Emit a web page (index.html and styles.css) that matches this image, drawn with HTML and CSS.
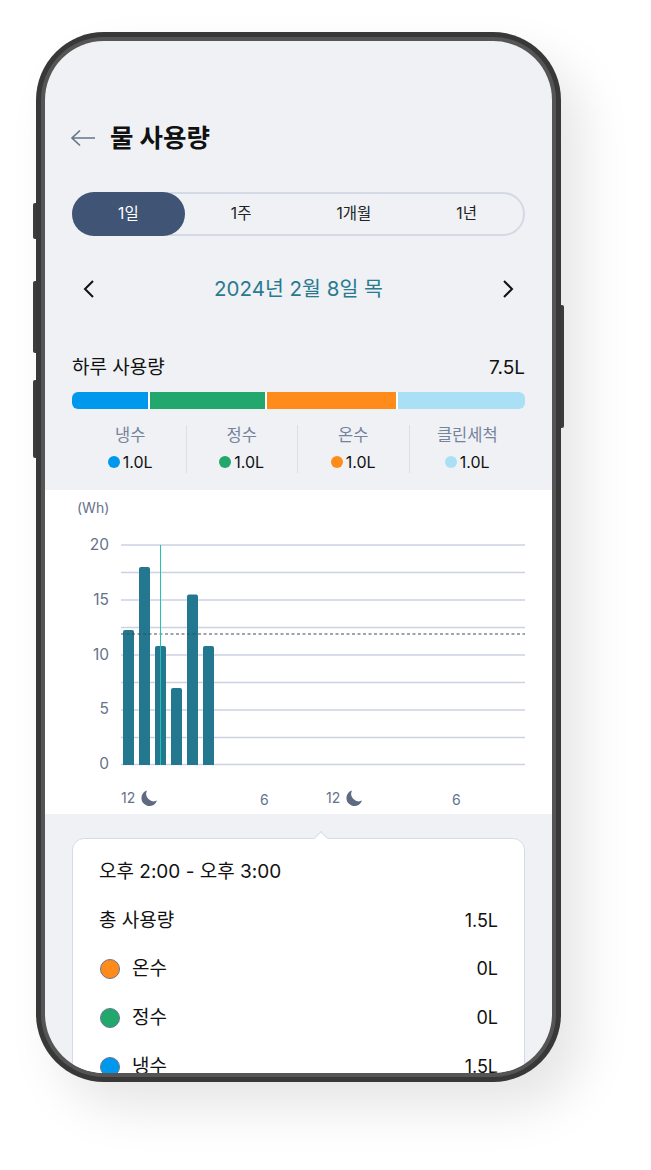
FILE: index.html
```html
<!DOCTYPE html>
<html lang="ko">
<head>
    <meta charset="UTF-8">
    <meta name="viewport" content="width=device-width, initial-scale=1.0">
    <title>물 사용량</title>
    <link rel="stylesheet" href="styles.css">
</head>
<body>
    <div class="phone">
        <span class="side_btn btn_a"></span>
        <span class="side_btn btn_b"></span>
        <span class="side_btn btn_c"></span>
        <span class="side_btn btn_d"></span>

        <div class="bezel">
            <main class="screen">
                <header class="top_bar">
                    <svg class="back" width="26" height="18" viewBox="0 0 26 18" fill="none" stroke="#66768f" stroke-width="1.7">
                        <path d="M25 9H2M10 1.5 2 9l8 7.5"/>
                    </svg>
                    <h1 class="page_title">물 사용량</h1>
                </header>

                <ul class="tabs">
                    <li class="tab on">1일</li>
                    <li class="tab">1주</li>
                    <li class="tab">1개월</li>
                    <li class="tab">1년</li>
                </ul>

                <div class="date_row">
                    <svg width="12" height="20" viewBox="0 0 12 20" fill="none" stroke="#111" stroke-width="2">
                        <path d="M10 2 2 10l8 8"/>
                    </svg>
                    <p class="date">2024년 2월 8일 목</p>
                    <svg width="12" height="20" viewBox="0 0 12 20" fill="none" stroke="#111" stroke-width="2">
                        <path d="m2 2 8 8-8 8"/>
                    </svg>
                </div>

                <section class="summary">
                    <div class="summary_head">
                        <span>하루 사용량</span>
                        <span>7.5L</span>
                    </div>
                    <div class="usage_bar">
                        <span class="seg seg_cold"></span>
                        <span class="seg seg_pure"></span>
                        <span class="seg seg_hot"></span>
                        <span class="seg seg_clean"></span>
                    </div>
                    <ul class="legend">
                        <li class="legend_item">
                            <span class="legend_name">냉수</span>
                            <span class="legend_val"><i class="dot cold"></i>1.0L</span>
                        </li>
                        <li class="legend_item">
                            <span class="legend_name">정수</span>
                            <span class="legend_val"><i class="dot pure"></i>1.0L</span>
                        </li>
                        <li class="legend_item">
                            <span class="legend_name">온수</span>
                            <span class="legend_val"><i class="dot hot"></i>1.0L</span>
                        </li>
                        <li class="legend_item">
                            <span class="legend_name">클린세척</span>
                            <span class="legend_val"><i class="dot clean"></i>1.0L</span>
                        </li>
                    </ul>
                </section>

                <section class="chart">
                    <svg class="chart_svg" width="507" height="324" viewBox="0 0 507 324">
                        <defs>
                            <path id="moon" d="M6 0.4A8 8 0 1 0 16 10.6 7.6 7.6 0 0 1 6 0.4Z" fill="#5d6a82"/>
                        </defs>
                        <g stroke="#ccd2e2" stroke-width="1.3">
                            <path d="M76 55H480M76 82.5H480M76 110H480M76 137.5H480M76 165H480M76 192.5H480M76 220H480M76 247.500H480M76 274.500H480"/>
                        </g>
                        <g fill="#23778f">
                            <path d="M78 275V142a2 2 0 0 1 2-2h7a2 2 0 0 1 2 2V275Z"/>
                            <path d="M94 275V79a2 2 0 0 1 2-2h7a2 2 0 0 1 2 2V275Z"/>
                            <path d="M110 275V158a2 2 0 0 1 2-2h7a2 2 0 0 1 2 2V275Z"/>
                            <path d="M126 275V200a2 2 0 0 1 2-2h7a2 2 0 0 1 2 2V275Z"/>
                            <path d="M142 275V106.500a2 2 0 0 1 2-2h7a2 2 0 0 1 2 2V275Z"/>
                            <path d="M158 275V158a2 2 0 0 1 2-2h7a2 2 0 0 1 2 2V275Z"/>
                        </g>
                        <path d="M76 144H480" stroke="#3f4a5c" stroke-width="1" stroke-dasharray="3 2.500"/>
                        <path d="M115.500 55V275" stroke="#1fc4b4" stroke-width="1"/>
                        <g class="axis_y" text-anchor="end">
                            <text x="64" y="60">20</text>
                            <text x="64" y="115">15</text>
                            <text x="64" y="170">10</text>
                            <text x="64" y="224">5</text>
                            <text x="64" y="279">0</text>
                        </g>
                        <text class="axis_unit" x="32" y="23">(Wh)</text>
                        <g class="axis_x">
                            <text x="76" y="313">12</text>
                            <use href="#moon" x="96" y="300"/>
                            <text x="215" y="315">6</text>
                            <text x="281" y="313">12</text>
                            <use href="#moon" x="301" y="300"/>
                            <text x="407" y="315">6</text>
                        </g>
                    </svg>
                </section>

                <section class="detail">
                    <div class="detail_card">
                        <span class="detail_arrow"></span>
                        <p class="detail_time">오후 2:00 - 오후 3:00</p>
                        <div class="detail_row">
                            <span class="detail_name">총 사용량</span>
                            <span>1.5L</span>
                        </div>
                        <div class="detail_row">
                            <span class="detail_name"><i class="swatch hot"></i>온수</span>
                            <span>0L</span>
                        </div>
                        <div class="detail_row">
                            <span class="detail_name"><i class="swatch pure"></i>정수</span>
                            <span>0L</span>
                        </div>
                        <div class="detail_row">
                            <span class="detail_name"><i class="swatch cold"></i>냉수</span>
                            <span>1.5L</span>
                        </div>
                    </div>
                </section>
            </main>
        </div>
    </div>
</body>
</html>
```

FILE: styles.css
```css
* {
    padding: 0;
    margin: 0;
    box-sizing: border-box;
}
ul {
    list-style-type: none;
}
i {
    font-style: normal;
}
html, body {
    height: 100%;
    overflow: hidden;
}
body {
    padding: 32px 0 0 36px;
    background: #fff;
    font-family: Inter, 'Noto Sans CJK KR', sans-serif;
    color: #111;
}

/* phone frame */
.phone {
    position: relative;
    width: 525px;
    height: 1050px;
    border-radius: 68px;
    background: #383838;
    padding: 5px 5px 5px 5px;
    box-shadow: 22px 26px 50px rgba(0, 0, 0, .10);
}
.bezel {
    width: 100%;
    height: 100%;
    padding: 4px;
    border-radius: 63px;
    background: #555;
}
.screen {
    width: 100%;
    height: 100%;
    border-radius: 59px;
    overflow: hidden;
    background: #eff1f5;
}
.side_btn {
    position: absolute;
    width: 3px;
    background: #3c3c3c;
}
.btn_a { left: -3px; top: 171px; height: 36px; border-radius: 2px 0 0 2px; }
.btn_b { left: -3px; top: 249px; height: 72px; border-radius: 2px 0 0 2px; }
.btn_c { left: -3px; top: 348px; height: 78px; border-radius: 2px 0 0 2px; }
.btn_d { right: -3px; top: 273px; height: 123px; border-radius: 0 2px 2px 0; }

/* header */
.top_bar {
    display: flex;
    align-items: center;
    gap: 14px;
    height: 40px;
    margin-top: 77px;
    padding-left: 25px;
}
.page_title {
    font-size: 25.500px;
    font-weight: 700;
    line-height: 40px;
}

/* period tabs */
.tabs {
    display: flex;
    height: 44px;
    margin: 34px 27px 0;
    border: 2px solid #d3d9e5;
    border-radius: 22px;
}
.tab {
    flex: 1;
    font-size: 15.500px;
    line-height: 39px;
    text-align: center;
    color: #222;
}
.tab.on {
    margin: -2px 0 -2px -2px;
    border-radius: 22px;
    background: #405575;
    line-height: 43px;
    color: #fff;
}

/* date */
.date_row {
    display: flex;
    justify-content: space-between;
    align-items: center;
    height: 30px;
    margin-top: 38px;
    padding: 0 38px;
}
.date {
    font-size: 20.500px;
    line-height: 30px;
    color: #2a7a8f;
}

/* day summary */
.summary {
    margin-top: 50px;
    padding: 0 27px;
    height: 136px;
}
.summary_head {
    display: flex;
    justify-content: space-between;
    padding-top: 1px;
    font-size: 19px;
    line-height: 26px;
}
.usage_bar {
    display: flex;
    gap: 2px;
    height: 17px;
    margin-top: 11px;
    border-radius: 6px;
    overflow: hidden;
    background: #fff;
}
.seg { display: block; }
.seg_cold { width: 76px; background: #0098ec; }
.seg_pure { width: 115px; background: #22a86d; }
.seg_hot { width: 129px; background: #ff8c1a; }
.seg_clean { flex: 1; background: #aae0f5; }
.legend {
    display: flex;
    margin-top: 16px;
    padding-left: 3px;
}
.legend_item {
    display: flex;
    flex-direction: column;
    align-items: center;
    width: 112px;
    height: 48px;
    border-right: 1px solid #dcdfe8;
}
.legend_item:last-child {
    width: 116px;
    border-right: 0;
}
.legend_name {
    font-size: 16.500px;
    line-height: 20px;
    color: #75839b;
}
.legend_val {
    display: flex;
    align-items: center;
    gap: 3px;
    margin-top: 6px;
    font-size: 16px;
    line-height: 22px;
}
.dot {
    width: 12px;
    height: 12px;
    border-radius: 50%;
}
.cold { background: #0098ec; }
.pure { background: #22a86d; }
.hot { background: #ff8c1a; }
.clean { background: #aae0f5; }

/* chart */
.chart {
    height: 324px;
    background: #fff;
}
.chart_svg {
    display: block;
}
.chart_svg text {
    font-family: Inter, 'Noto Sans CJK KR', sans-serif;
    fill: #66728a;
}
.axis_y text {
    font-size: 15.500px;
}
.axis_unit {
    font-size: 14px;
}
.axis_x text {
    font-size: 14px;
}

/* selected hour */
.detail {
    padding: 24px 27px 0;
}
.detail_card {
    position: relative;
    padding: 19px 26px 0 26px;
    height: 260px;
    border: 1.5px solid #d5daea;
    border-radius: 12px;
    background: #fff;
}
.detail_arrow {
    position: absolute;
    left: 243px;
    top: -6px;
    width: 10px;
    height: 10px;
    border-top: 1.5px solid #d5daea;
    border-left: 1.5px solid #d5daea;
    background: #fff;
    transform: rotate(45deg);
}
.detail_time {
    font-size: 19px;
    line-height: 28px;
}
.detail_row {
    display: flex;
    justify-content: space-between;
    align-items: center;
    height: 28px;
    margin-top: 20.700px;
    font-size: 18px;
    line-height: 28px;
}
.detail_name {
    display: flex;
    align-items: center;
    gap: 12px;
    font-size: 19px;
}
.swatch {
    width: 20px;
    height: 20px;
    margin-left: 1px;
    border: 1px solid #66768f;
    border-radius: 50%;
}
```
